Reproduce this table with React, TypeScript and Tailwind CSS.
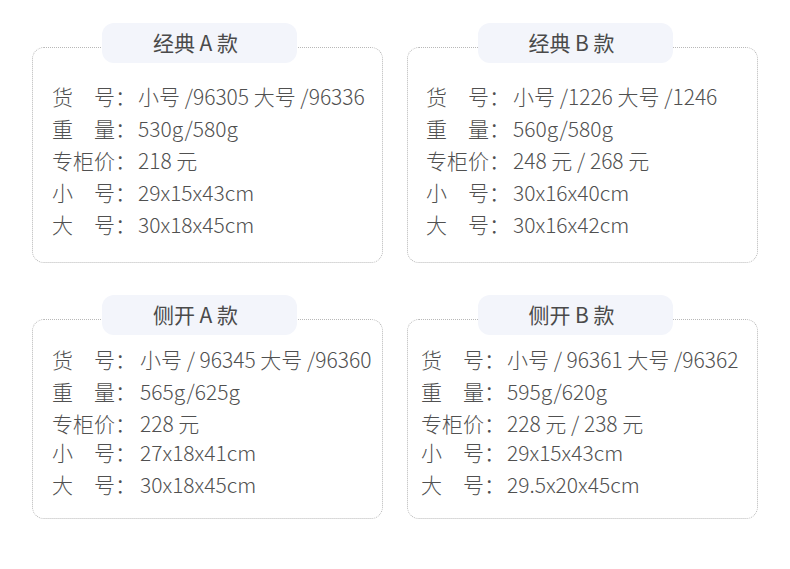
import React from "react";

interface Spec {
  title: string;
  rows: [string, string][];
}

const cards: Spec[] = [
  {
    title: "经典 A 款",
    rows: [
      ["货　号：", "小号 /96305 大号 /96336"],
      ["重　量：", "530g/580g"],
      ["专柜价：", "218 元"],
      ["小　号：", "29x15x43cm"],
      ["大　号：", "30x18x45cm"],
    ],
  },
  {
    title: "经典 B 款",
    rows: [
      ["货　号：", "小号 /1226 大号 /1246"],
      ["重　量：", "560g/580g"],
      ["专柜价：", "248 元 / 268 元"],
      ["小　号：", "30x16x40cm"],
      ["大　号：", "30x16x42cm"],
    ],
  },
  {
    title: "侧开 A 款",
    rows: [
      ["货　号：", "小号 / 96345 大号 /96360"],
      ["重　量：", "565g/625g"],
      ["专柜价：", "228 元"],
      ["小　号：", "27x18x41cm"],
      ["大　号：", "30x18x45cm"],
    ],
  },
  {
    title: "侧开 B 款",
    rows: [
      ["货　号：", "小号 / 96361 大号 /96362"],
      ["重　量：", "595g/620g"],
      ["专柜价：", "228 元 / 238 元"],
      ["小　号：", "29x15x43cm"],
      ["大　号：", "29.5x20x45cm"],
    ],
  },
];

const Card = ({ spec, bottom, right }: { spec: Spec; bottom?: boolean; right?: boolean }) => {
  return (
    <div className="w-[351px]">
      <div
        className={`relative z-10 flex h-[40px] w-[195px] items-center justify-center rounded-[12px] bg-[#f3f5fb] pr-[8px] text-[21px] text-[#4a4a4a] ${
          right ? "ml-[71px]" : "ml-[70px]"
        }`}
      >
        {spec.title}
      </div>
      <div
        className={`-mt-[16px] rounded-[12px] border border-dotted border-[#b8b8b8] ${
          bottom ? "h-[200px] pt-[23px]" : "h-[216px] pt-[32px]"
        } ${bottom && right ? "pl-[13px]" : right ? "pl-[18px]" : "pl-[19px]"}`}
      >
        {spec.rows.map(([label, value], i) => (
          <div
            key={label}
            className={`flex whitespace-nowrap text-[21px] font-light leading-[32px] text-[#505050] ${
              bottom && i === 2 ? "h-[29px]" : "h-[32px]"
            }`}
          >
            <span className="w-[86px] shrink-0">{label}</span>
            <span className={bottom && !right ? "ml-[2px]" : right && !bottom ? "ml-[1px]" : ""}>{value}</span>
          </div>
        ))}
      </div>
    </div>
  );
};

const App = () => {
  return (
    <div
      className="h-[569px] w-[790px] bg-white pl-[32px] pt-[23px]"
      style={{ fontFamily: '"Noto Sans CJK SC", "Noto Sans", sans-serif' }}
    >
      <div className="flex gap-[24px]">
        <Card spec={cards[0]} />
        <Card spec={cards[1]} right />
      </div>
      <div className="mt-[32px] flex gap-[24px]">
        <Card spec={cards[2]} bottom />
        <Card spec={cards[3]} bottom right />
      </div>
    </div>
  );
};

export default App;
